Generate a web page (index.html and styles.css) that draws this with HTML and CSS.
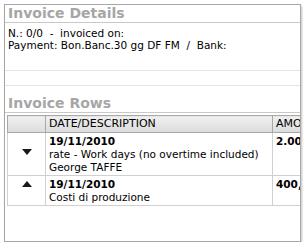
FILE: index.html
```html
<!DOCTYPE html>
<html lang="en">
<head>
    <meta charset="UTF-8">
    <title>Invoice</title>
    <link rel="stylesheet" href="styles.css">
</head>
<body>
    <div class="panel">
        <h2 class="section-title">Invoice Details</h2>
        <div class="details">
            <div>N.: 0/0 &nbsp;- &nbsp;invoiced on:</div>
            <div>Payment: Bon.Banc.30 gg DF FM &nbsp;/ &nbsp;Bank:</div>
        </div>
        <div class="spacer"></div>
        <div class="spacer small"></div>
        <h2 class="section-title">Invoice Rows</h2>
        <div class="rows-wrap">
            <table class="rows">
                <thead>
                    <tr>
                        <th class="col-arrow"></th>
                        <th class="col-desc">DATE/DESCRIPTION</th>
                        <th class="col-amount">AMOUNT</th>
                    </tr>
                </thead>
                <tbody>
                    <tr>
                        <td class="col-arrow arrow-mid">
                            <svg class="arrow" width="10" height="6" viewBox="0 0 10 6"><path d="M0 0h10L5 6z"/></svg>
                        </td>
                        <td class="col-desc">
                            <b>19/11/2010</b><br>
                            rate - Work days (no overtime included)<br>
                            George TAFFE
                        </td>
                        <td class="col-amount"><b>2.000,00</b></td>
                    </tr>
                    <tr>
                        <td class="col-arrow">
                            <svg class="arrow" width="10" height="6" viewBox="0 0 10 6"><path d="M0 6h10L5 0z"/></svg>
                        </td>
                        <td class="col-desc">
                            <b>19/11/2010</b><br>
                            Costi di produzione
                        </td>
                        <td class="col-amount"><b>400,00</b></td>
                    </tr>
                </tbody>
            </table>
        </div>
    </div>
</body>
</html>
```

FILE: styles.css
```css
body {
    margin: 0;
    padding: 0;
    background-color: #fff;
    font-family: "DejaVu Sans", Verdana, sans-serif;
    font-size: 10.5px;
    color: #000;
}

.panel {
    margin: 4px 6px 0 4px;
    height: 236px;
    border: 1px solid #a8a8a8;
    box-shadow: 1px 2px 2px rgba(0, 0, 0, 0.25);
    overflow: hidden;
}

.section-title {
    margin: 0;
    padding: 0 3px;
    height: 17px;
    line-height: 17px;
    font-size: 14px;
    font-weight: bold;
    color: #a6a6a6;
    border-bottom: 1px solid #c8c8c8;
}

.details {
    padding: 4px 3px 0;
    line-height: 12px;
    height: 43px;
    border-bottom: 1px solid #e4e4e4;
}

.spacer {
    height: 14px;
    border-bottom: 1px solid #e4e4e4;
}

.spacer.small {
    height: 9px;
    border-bottom: none;
}

.rows-wrap {
    padding: 2px 0 0 2px;
    overflow: hidden;
}

.rows {
    border-collapse: collapse;
    table-layout: fixed;
    width: 340px;
}

.rows th,
.rows td {
    border: 1px solid #d0d0d0;
    padding: 2px 3px 1px;
    text-align: left;
    vertical-align: top;
    line-height: 13px;
}

.rows th {
    height: 14px;
    padding: 1px 3px;
    font-size: 11px;
    font-weight: normal;
    background: linear-gradient(#f0f0f0, #dcdcdc);
    border-color: #a8a8a8;
}

.col-arrow {
    width: 31px;
}

.col-desc {
    width: 220px;
}

.col-amount {
    width: 70px;
}

td.col-arrow {
    text-align: center;
    padding-top: 5px;
}

td.arrow-mid {
    padding-top: 16px;
}

.arrow {
    display: block;
    margin: 0 auto;
    fill: #1a1a1a;
}
```
